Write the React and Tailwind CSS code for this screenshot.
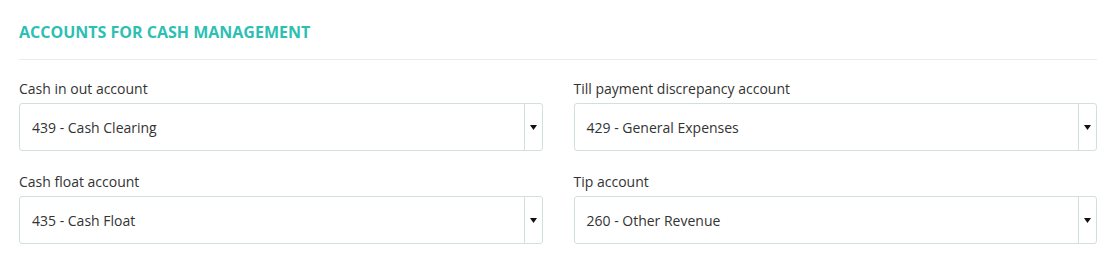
const fields = [
  { label: "Cash in out account", value: "439 - Cash Clearing" },
  { label: "Till payment discrepancy account", value: "429 - General Expenses" },
  { label: "Cash float account", value: "435 - Cash Float" },
  { label: "Tip account", value: "260 - Other Revenue" },
];

function SelectField({ label, value }) {
  return (
    <div className="flex flex-col">
      <label className="text-[14px] leading-[20px] text-[#333]">{label}</label>
      <div className="mt-[4px] flex h-[48px] rounded-[3px] border border-[#d3dfdd] bg-white">
        <div className="flex flex-1 items-center pl-[12px] text-[14px] text-[#333]">
          {value}
        </div>
        <div className="flex w-[18px] items-center justify-center border-l border-[#d3dfdd]">
          <svg width="7" height="5" viewBox="0 0 7 5">
            <path d="M0 0 H7 L3.5 5 Z" fill="#111" />
          </svg>
        </div>
      </div>
    </div>
  );
}

export default function App() {
  return (
    <div className="min-h-[277px] bg-white px-[19px] pt-[22px] font-['Open_Sans',sans-serif]">
      {/* Section heading */}
      <h2 className="text-[16px] font-bold uppercase leading-[20px] text-[#2ebfb3]">
        Accounts for cash management
      </h2>
      <div className="mt-[17px] h-px bg-[#e8ecec]" />

      {/* Account selects */}
      <div className="mt-[19px] grid grid-cols-2 gap-x-[31px] gap-y-[21px]">
        {fields.map((f) => (
          <SelectField key={f.label} label={f.label} value={f.value} />
        ))}
      </div>
    </div>
  );
}
